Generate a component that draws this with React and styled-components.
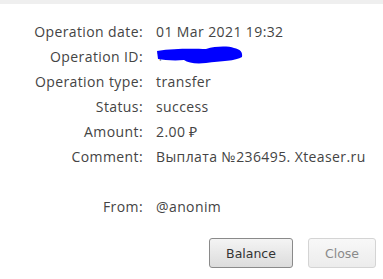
import styled, { createGlobalStyle } from "styled-components";

const GlobalStyle = createGlobalStyle`
  body {
    margin: 0;
    background: #fff;
  }
`;

const rows = [
  { label: "Operation date:", value: "01 Mar 2021 19:32" },
  { label: "Operation ID:", value: "hidden" },
  { label: "Operation type:", value: "transfer" },
  { label: "Status:", value: "success" },
  { label: "Amount:", value: "2.00 ₽" },
  { label: "Comment:", value: "Выплата №236495. Xteaser.ru" },
  { label: "", value: "" },
  { label: "From:", value: "@anonim" },
];

const Scribble = () => (
  <svg width="88" height="19" viewBox="0 0 88 19">
    <path
      d="M1 5 C20 2 40 3 50 3 C60 0 72 0 78 2 C84 3 87 6 86 11 C80 15 65 15 50 17 C40 18 32 17 28 14 C18 15 8 14 2 13 Z"
      fill="#0000ff"
    />
  </svg>
);

const App = () => {
  return (
    <Page>
      <GlobalStyle />
      <TopStrip />
      <Details>
        {rows.map((r, i) => (
          <Row key={i}>
            <Label>{r.label}</Label>
            <Value>
              {r.value === "hidden" ? (
                <Hidden>
                  <HiddenDigit>1</HiddenDigit>
                  <Scribble />
                </Hidden>
              ) : (
                r.value
              )}
            </Value>
          </Row>
        ))}
      </Details>
      <Buttons>
        <Button>Balance</Button>
        <Button disabled>Close</Button>
      </Buttons>
    </Page>
  );
};

const Page = styled.div`
  width: 383px;
  height: 279px;
  display: flex;
  flex-direction: column;
  background: #fff;
  font-family: "Open Sans", "Liberation Sans", sans-serif;
  font-size: 14px;
  letter-spacing: 0.4px;
  color: #444;
`;

const TopStrip = styled.div`
  height: 4px;
  background: #efefef;
`;

const Details = styled.div`
  display: flex;
  flex-direction: column;
  padding-top: 15px;
`;

const Row = styled.div`
  display: grid;
  grid-template-columns: 143px 1fr;
  column-gap: 13px;
  height: 25px;
  align-items: center;
`;

const Label = styled.span`
  text-align: right;
`;

const Value = styled.span`
  white-space: nowrap;
`;

const Hidden = styled.span`
  position: relative;
  display: inline-block;
  height: 20px;
  width: 90px;

  svg {
    position: absolute;
    left: 0;
    top: 1px;
  }
`;

const HiddenDigit = styled.span`
  position: absolute;
  left: 0;
  top: 1px;
  color: #888;
`;

const Buttons = styled.div`
  margin-top: auto;
  display: flex;
  justify-content: flex-end;
  gap: 15px;
  padding: 0 7px 11px 0;
`;

const Button = styled.button`
  height: 30px;
  padding: 0 16px;
  border-radius: 3px;
  font-family: "DejaVu Sans", Verdana, sans-serif;
  font-size: 12.5px;
  letter-spacing: 0;
  border: 1px solid ${(p) => (p.disabled ? "#d4d4d4" : "#8a8a8a")};
  color: ${(p) => (p.disabled ? "#8a8a8a" : "#333")};
  background: ${(p) =>
    p.disabled
      ? "linear-gradient(#f8f8f8, #ececec)"
      : "linear-gradient(#f4f4f4, #dcdcdc)"};
`;

export default App;
